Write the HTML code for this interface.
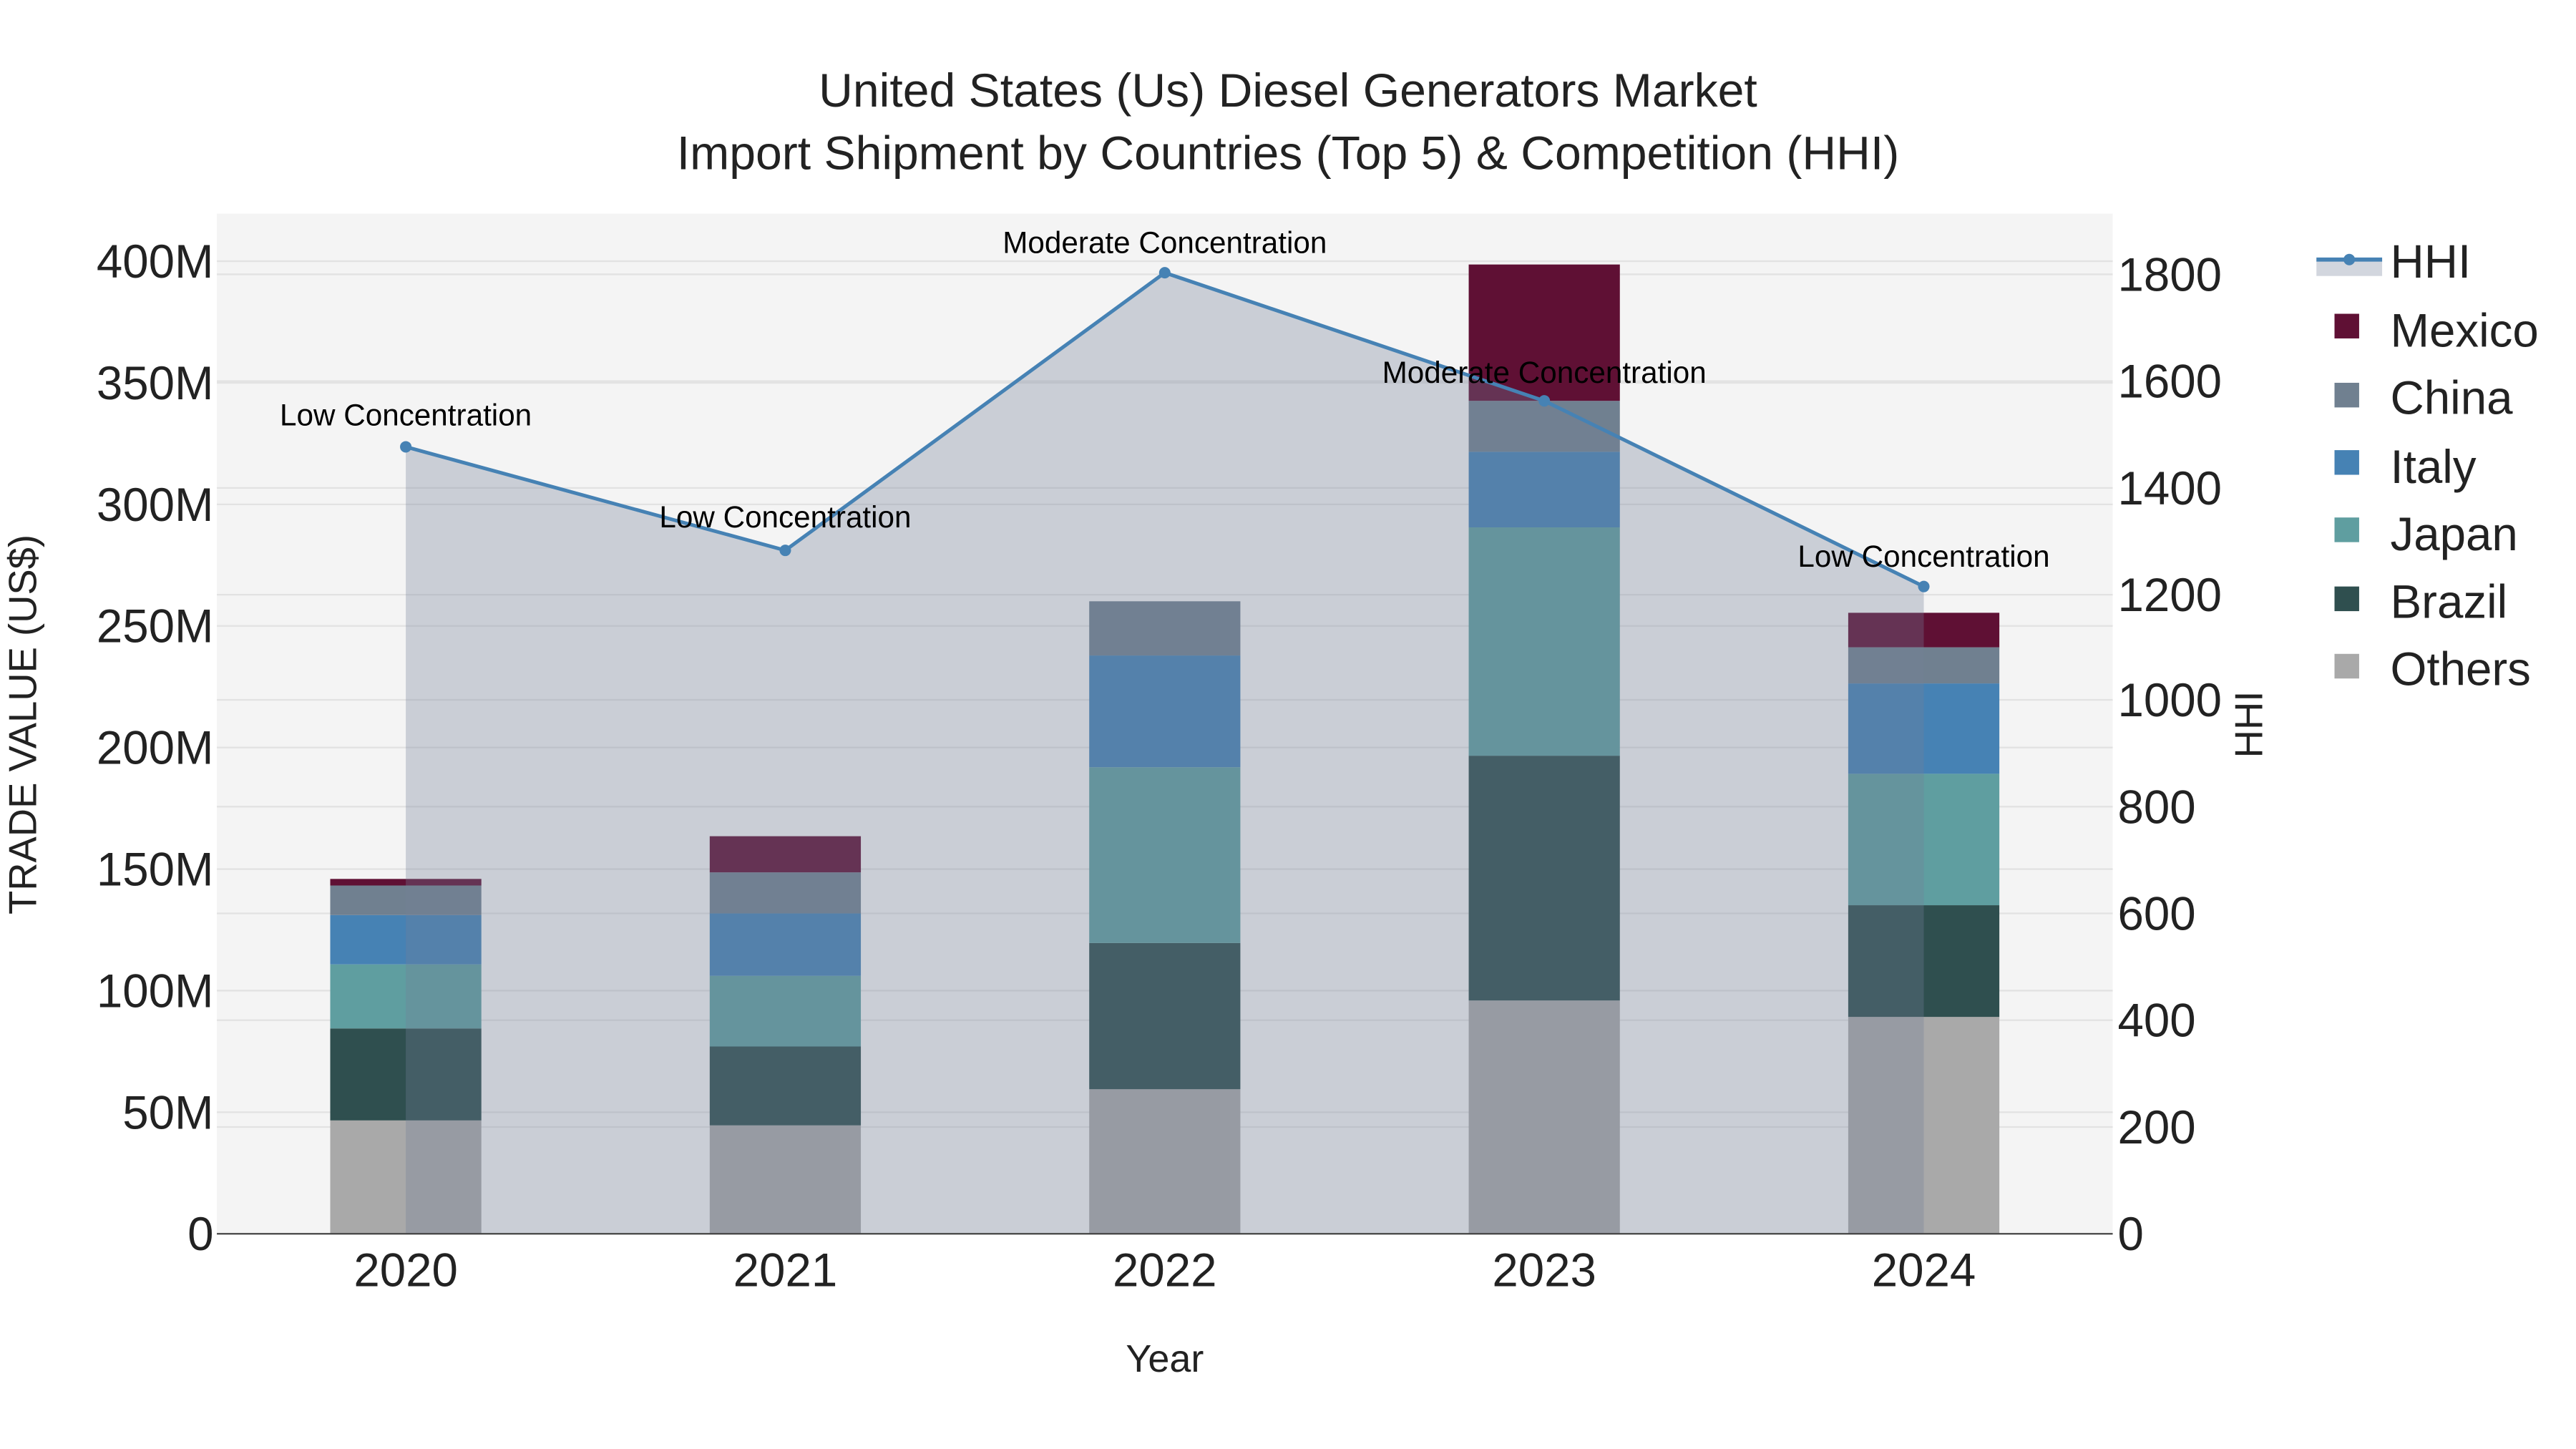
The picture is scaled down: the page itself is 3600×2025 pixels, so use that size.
<!DOCTYPE html>
<html><head><meta charset="utf-8"><style>html,body{margin:0;padding:0;background:#fff}svg{display:block}</style></head>
<body>
<svg width="3600" height="2025" viewBox="0 0 1568 882" xmlns="http://www.w3.org/2000/svg" font-family="Liberation Sans, sans-serif">
<rect width="1568" height="882" fill="#fff"/>
<rect x="132" y="130" width="1154" height="621" fill="#f4f4f4"/>
<g stroke="#e2e2e2" stroke-width="1">
<line x1="132" x2="1286" y1="677" y2="677"/><line x1="132" x2="1286" y1="603" y2="603"/><line x1="132" x2="1286" y1="529" y2="529"/><line x1="132" x2="1286" y1="455" y2="455"/><line x1="132" x2="1286" y1="381" y2="381"/><line x1="132" x2="1286" y1="307" y2="307"/><line x1="132" x2="1286" y1="233" y2="233"/><line x1="132" x2="1286" y1="159" y2="159"/>
<line x1="132" x2="1286" y1="686" y2="686"/><line x1="132" x2="1286" y1="621" y2="621"/><line x1="132" x2="1286" y1="556" y2="556"/><line x1="132" x2="1286" y1="491" y2="491"/><line x1="132" x2="1286" y1="426" y2="426"/><line x1="132" x2="1286" y1="362" y2="362"/><line x1="132" x2="1286" y1="297" y2="297"/><line x1="132" x2="1286" y1="232" y2="232"/><line x1="132" x2="1286" y1="167" y2="167"/>
</g>
<g>
<rect x="201" y="682" width="92" height="69" fill="#a9a9a9"/><rect x="201" y="626" width="92" height="56" fill="#2f4f4f"/><rect x="201" y="587" width="92" height="39" fill="#5f9ea0"/><rect x="201" y="557" width="92" height="30" fill="#4682b4"/><rect x="201" y="539" width="92" height="18" fill="#708090"/><rect x="201" y="535" width="92" height="4" fill="#5f1034"/>
<rect x="432" y="685" width="92" height="66" fill="#a9a9a9"/><rect x="432" y="637" width="92" height="48" fill="#2f4f4f"/><rect x="432" y="594" width="92" height="43" fill="#5f9ea0"/><rect x="432" y="556" width="92" height="38" fill="#4682b4"/><rect x="432" y="531" width="92" height="25" fill="#708090"/><rect x="432" y="509" width="92" height="22" fill="#5f1034"/>
<rect x="663" y="663" width="92" height="88" fill="#a9a9a9"/><rect x="663" y="574" width="92" height="89" fill="#2f4f4f"/><rect x="663" y="467" width="92" height="107" fill="#5f9ea0"/><rect x="663" y="399" width="92" height="68" fill="#4682b4"/><rect x="663" y="366" width="92" height="33" fill="#708090"/>
<rect x="894" y="609" width="92" height="142" fill="#a9a9a9"/><rect x="894" y="460" width="92" height="149" fill="#2f4f4f"/><rect x="894" y="321" width="92" height="139" fill="#5f9ea0"/><rect x="894" y="275" width="92" height="46" fill="#4682b4"/><rect x="894" y="244" width="92" height="31" fill="#708090"/><rect x="894" y="161" width="92" height="83" fill="#5f1034"/>
<rect x="1125" y="619" width="92" height="132" fill="#a9a9a9"/><rect x="1125" y="551" width="92" height="68" fill="#2f4f4f"/><rect x="1125" y="471" width="92" height="80" fill="#5f9ea0"/><rect x="1125" y="416" width="92" height="55" fill="#4682b4"/><rect x="1125" y="394" width="92" height="22" fill="#708090"/><rect x="1125" y="373" width="92" height="21" fill="#5f1034"/>
</g>
<polygon points="247,751 247,272 478,335 709,166 940,244 1171,357 1171,751" fill="rgb(114,126,151)" fill-opacity="0.32"/>
<polyline points="247,272 478,335 709,166 940,244 1171,357" fill="none" stroke="#4682b4" stroke-width="2.2"/>
<g fill="#4682b4"><circle cx="247" cy="272" r="3.5"/><circle cx="478" cy="335" r="3.5"/><circle cx="709" cy="166" r="3.5"/><circle cx="940" cy="244" r="3.5"/><circle cx="1171" cy="357" r="3.5"/></g>
<line x1="132" x2="1286" y1="751" y2="751" stroke="#444" stroke-width="1"/>
<g font-size="18.4" fill="#000" text-anchor="middle">
<text x="247" y="259">Low Concentration</text><text x="478" y="321">Low Concentration</text><text x="709" y="154">Moderate Concentration</text><text x="940" y="233">Moderate Concentration</text><text x="1171" y="345">Low Concentration</text>
</g>
<g font-size="28.5" fill="#222" text-anchor="end">
<text x="130" y="761">0</text><text x="130" y="687">50M</text><text x="130" y="613">100M</text><text x="130" y="539">150M</text><text x="130" y="465">200M</text><text x="130" y="391">250M</text><text x="130" y="317">300M</text><text x="130" y="243">350M</text><text x="130" y="169">400M</text>
</g>
<g font-size="28.5" fill="#222">
<text x="1289" y="761">0</text><text x="1289" y="696">200</text><text x="1289" y="631">400</text><text x="1289" y="566">600</text><text x="1289" y="501">800</text><text x="1289" y="436">1000</text><text x="1289" y="372">1200</text><text x="1289" y="307">1400</text><text x="1289" y="242">1600</text><text x="1289" y="177">1800</text>
</g>
<g font-size="28.5" fill="#222" text-anchor="middle">
<text x="247" y="783">2020</text><text x="478" y="783">2021</text><text x="709" y="783">2022</text><text x="940" y="783">2023</text><text x="1171" y="783">2024</text>
</g>
<text x="709" y="835" font-size="23.5" fill="#222" text-anchor="middle">Year</text>
<text transform="translate(22,441) rotate(-90)" font-size="23.7" fill="#222" text-anchor="middle">TRADE VALUE (US$)</text>
<text transform="translate(1377,441) rotate(-90)" font-size="23.7" fill="#222" text-anchor="middle">HHI</text>
<g font-size="28.8" fill="#222" text-anchor="middle">
<text x="784" y="65">United States (Us) Diesel Generators Market</text>
<text x="784" y="103">Import Shipment by Countries (Top 5) &amp; Competition (HHI)</text>
</g>
<g font-size="28.5" fill="#222">
<rect x="1410" y="158" width="40" height="10" fill="rgb(114,126,151)" fill-opacity="0.32"/>
<line x1="1410" x2="1450" y1="158" y2="158" stroke="#4682b4" stroke-width="2.5"/><circle cx="1430" cy="158" r="3.5" fill="#4682b4"/>
<text x="1455" y="169">HHI</text>
<rect x="1421" y="191" width="15" height="15" fill="#5f1034"/><text x="1455" y="211">Mexico</text>
<rect x="1421" y="233" width="15" height="15" fill="#708090"/><text x="1455" y="252">China</text>
<rect x="1421" y="274" width="15" height="15" fill="#4682b4"/><text x="1455" y="294">Italy</text>
<rect x="1421" y="315" width="15" height="15" fill="#5f9ea0"/><text x="1455" y="335">Japan</text>
<rect x="1421" y="357" width="15" height="15" fill="#2f4f4f"/><text x="1455" y="376">Brazil</text>
<rect x="1421" y="398" width="15" height="15" fill="#a9a9a9"/><text x="1455" y="417">Others</text>
</g>
</svg>
</body></html>
